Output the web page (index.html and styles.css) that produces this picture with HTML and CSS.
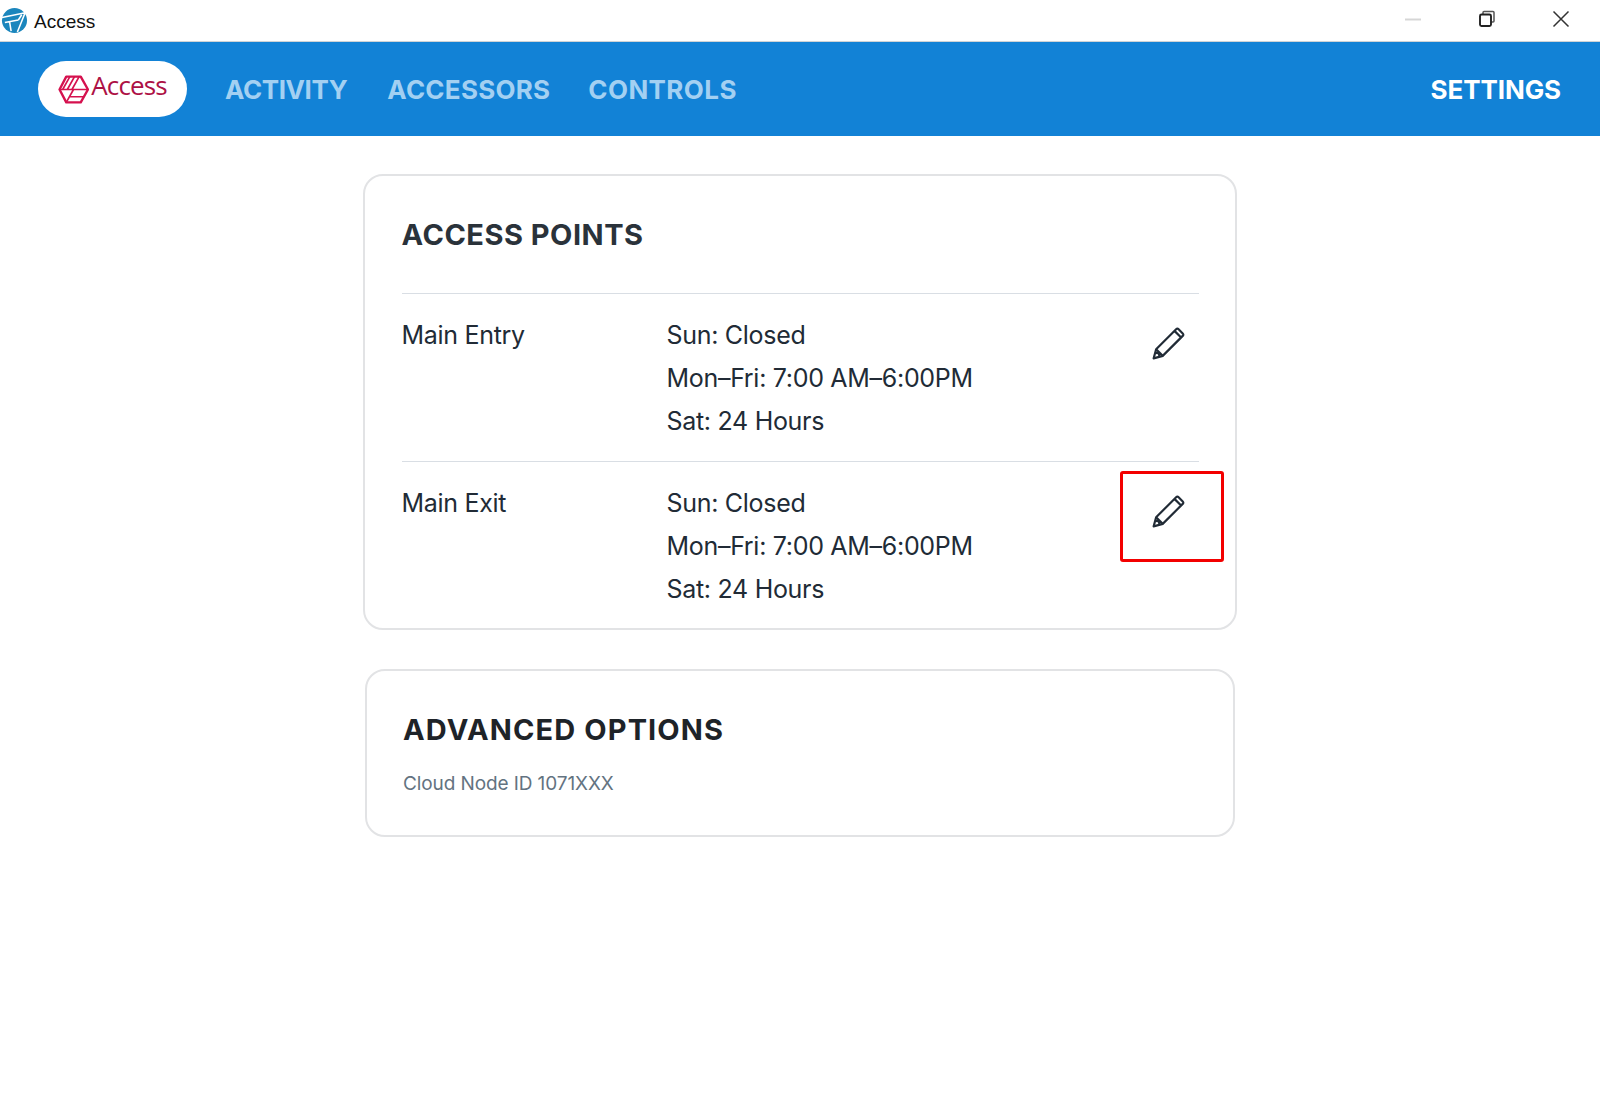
FILE: index.html
```html
<!DOCTYPE html>
<html lang="en">
<head>
<meta charset="utf-8">
<title>Access</title>
<link rel="stylesheet" href="styles.css">
</head>
<body>
<svg class="defs" width="0" height="0" aria-hidden="true">
  <symbol id="pencil" viewBox="0 0 32 32">
    <path d="M1.6 30.4 L4 21.6 L23.4 2.2 Q24.6 1 25.8 2.2 L29.8 6.2 Q31 7.4 29.8 8.6 L10.4 28 Z M22 4 L28 10 M4 21.6 L10.4 28 M2.9 25.7 L6 24.8 L6.9 27.4" fill="none" stroke="currentColor" stroke-width="2.1" stroke-linejoin="round" stroke-linecap="round"/>
  </symbol>
</svg>
<header class="titlebar">
  <div class="app-id">
    <svg class="app-icon" viewBox="0 0 28 28" aria-hidden="true">
      <circle cx="14" cy="14" r="13" fill="#1b86bd"/>
      <path d="M1 11 L25 6 L17 26 M4 16 L18 13.5 M9 16 L10.5 25 M18 13.5 L21.5 8" fill="none" stroke="#fff" stroke-width="1.6"/>
    </svg>
    <span class="app-name">Access</span>
  </div>
  <div class="win-controls">
    <svg class="win-btn" viewBox="0 0 18 18" aria-hidden="true"><path d="M1 9.5H17" stroke="#d6d6d6" stroke-width="2"/></svg>
    <svg class="win-btn" viewBox="0 0 18 18" aria-hidden="true"><path d="M5 4V2.5Q5 1.5 6 1.5H15Q16 1.5 16 2.5V11Q16 12 15 12H13.5" fill="none" stroke="#555" stroke-width="1.5"/><rect x="2" y="4.5" width="11" height="11.5" rx="1.5" fill="#fff" stroke="#222" stroke-width="1.9"/></svg>
    <svg class="win-btn" viewBox="0 0 18 18" aria-hidden="true"><path d="M1.5 1.5L16.5 16.5M16.5 1.5L1.5 16.5" stroke="#333" stroke-width="1.5"/></svg>
  </div>
</header>
<nav class="navbar">
  <div class="logo-pill">
    <svg class="logo-mark" viewBox="0 0 30 28" aria-hidden="true">
      <path d="M8 1.5H22L29 14L22 26.5H8L1.5 14Z" fill="none" stroke="#d5114e" stroke-width="2.3" stroke-linejoin="round"/>
      <path d="M4.5 14L11.5 1.5 M9 14L16 1.5 M13.5 14L20.5 1.5 M2 14H28.5 M15 14L8 26.5 M11 21H25" fill="none" stroke="#d5114e" stroke-width="1.6"/>
    </svg>
    <span class="logo-text">Access</span>
  </div>
  <a class="nav-link nav-activity">ACTIVITY</a>
  <a class="nav-link nav-accessors">ACCESSORS</a>
  <a class="nav-link nav-controls">CONTROLS</a>
  <a class="nav-link nav-settings">SETTINGS</a>
</nav>
<main class="content">
  <section class="card card-points">
    <h2 class="card-title title-points">ACCESS POINTS</h2>
    <div class="point">
      <div class="point-name">Main Entry</div>
      <div class="point-hours"><div>Sun: Closed</div><div>Mon–Fri: 7:00 AM–6:00PM</div><div>Sat: 24 Hours</div></div>
      <button class="edit-btn" aria-label="Edit Main Entry"><svg class="pencil"><use href="#pencil"/></svg></button>
    </div>
    <div class="point">
      <div class="point-name">Main Exit</div>
      <div class="point-hours"><div>Sun: Closed</div><div>Mon–Fri: 7:00 AM–6:00PM</div><div>Sat: 24 Hours</div></div>
      <button class="edit-btn" aria-label="Edit Main Exit"><svg class="pencil"><use href="#pencil"/></svg><span class="highlight"></span></button>
    </div>
  </section>
  <section class="card card-advanced">
    <h2 class="card-title title-advanced">ADVANCED OPTIONS</h2>
    <p class="node-id">Cloud Node ID 1071XXX</p>
  </section>
</main>
</body>
</html>
```

FILE: styles.css
```css
* { box-sizing: border-box; }
html, body { margin: 0; height: 100%; background: #fff; }
body { font-family: Inter, "Liberation Sans", sans-serif; color: #212b36; overflow: hidden; }
.defs { position: absolute; }

.titlebar { height: 42px; display: flex; align-items: center; justify-content: space-between; border-bottom: 1px solid #cfd3d6; background: #fff; }
.app-id { display: flex; align-items: center; gap: 6px; padding: 0 0 0 1px; }
.app-icon { width: 27px; height: 27px; }
.app-name { font: 19px/24px "Liberation Sans", sans-serif; color: #111; margin-top: 3px; }
.win-controls { display: flex; gap: 56px; padding-right: 30px; margin-top: -4px; }
.win-btn { width: 18px; height: 18px; display: block; }

.navbar { height: 94px; background: #1282d6; display: flex; align-items: center; gap: 38px; padding: 0 39px 0 38px; }
.logo-pill { width: 149px; height: 56px; border-radius: 28px; background: #fff; display: flex; align-items: center; justify-content: center; gap: 2px; }
.logo-mark { width: 31px; height: 29px; margin-top: 1px; }
.logo-text { font: 500 26px/30px "Open Sans", sans-serif; letter-spacing: -.9px; color: #ad1145; margin-top: -9px; }
.nav-link { font: 700 26px/32px Inter, sans-serif; letter-spacing: .25px; color: #a3d0f2; margin-top: 2px; }
.nav-activity { letter-spacing: -.4px; }
.nav-accessors { margin-left: 2px; }
.nav-controls { letter-spacing: .4px; }
.nav-settings { margin-left: auto; color: #fff; letter-spacing: -.1px; }

.content { display: flex; flex-direction: column; align-items: center; padding-top: 38px; gap: 39px; }
.card { background: #fff; border: 2px solid #e2e3e5; border-radius: 20px; }
.card-points { width: 874px; height: 456px; padding: 0 36.5px; }
.card-advanced { width: 870px; height: 168px; padding: 0 36px; }
.card-title { margin: 0; font: 700 29px/36px Inter, sans-serif; }
.title-points { height: 117px; padding-top: 41px; color: #2a323a; letter-spacing: .5px; }
.title-advanced { padding-top: 41px; height: 99px; color: #1e2328; letter-spacing: 1.1px; }

.point { display: flex; height: 168px; border-top: 1px solid #d9dee4; padding-top: 20px; font-size: 25px; line-height: 43px; letter-spacing: -.3px; }
.point + .point { height: 167px; }
.point-name { width: 265px; color: #212b36; }
.point-hours { flex: 1; color: #212b36; }
.edit-btn { position: relative; width: 50px; height: 40px; padding: 0; margin-top: 9px; border: 0; background: none; color: #212b36; }
.pencil { display: block; width: 33px; height: 33px; margin-left: 3px; }
.highlight { position: absolute; left: -29px; top: -20px; width: 104px; height: 91px; border: 3px solid #f30000; border-radius: 3px; }

.node-id { margin: 0; font-size: 19px; line-height: 28px; letter-spacing: -.1px; color: #637381; }
```
